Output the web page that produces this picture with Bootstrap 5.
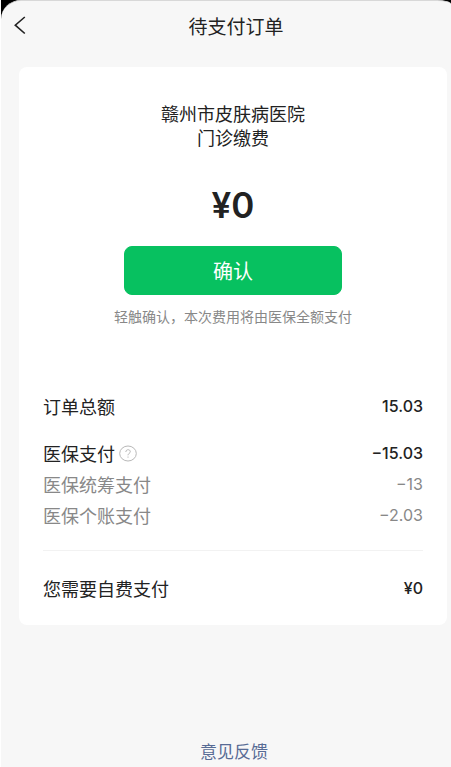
<!DOCTYPE html>
<html lang="zh-CN">
<head>
<meta charset="utf-8">
<meta name="viewport" content="width=device-width, initial-scale=1">
<title>待支付订单</title>
<link href="https://cdn.jsdelivr.net/npm/bootstrap@5.3.0/dist/css/bootstrap.min.css" rel="stylesheet">
<style>
  body { background: #f7f7f7; color: #222; font-family: "Noto Sans CJK SC", sans-serif; font-size: 18px; }
  .app { border-left: 1px solid #fff; }
  .topbar-back { background: #000; margin-left: -1px; padding-left: 1px; }
  .topbar { background: #f7f7f7; height: 50px; border-top: 1px solid #d8d8d8; border-radius: 20px 14px 0 0 / 19px 4px 0 0; padding: 0 8px 0 12px; }
  .topbar h1 { font-size: 19px; line-height: 24px; }
  .back-btn { width: 16px; height: 24px; color: #222; }
  .order-card { margin: 17px 4px 0 18px; padding: 34px 24px 21px; border-radius: 8px; background: #fff; }
  .merchant { line-height: 24px; }
  .amount { font: 600 35px/40px Inter, sans-serif; margin-top: 36px; }
  .confirm-btn { --bs-btn-bg: #07c160; --bs-btn-border-color: #07c160; --bs-btn-hover-bg: #06ad56; --bs-btn-hover-border-color: #06ad56; --bs-btn-active-bg: #06ad56;
    width: 218px; height: 49px; margin-top: 21px; border-radius: 8px; font-size: 20px; line-height: 24px; }
  .hint { font-size: 14px; line-height: 20px; margin-top: 11px; color: #888; }
  .fees { margin-top: 65px; line-height: 31px; }
  .fees dt { font-weight: 400; }
  .fees dd { font-family: Inter, sans-serif; font-size: 16px; font-weight: 500; }
  .fees .fee-sub { color: #888; }
  .fees .fee-sub dd { font-weight: 400; }
  .fee-group { margin-top: 16px; }
  .fee-self { margin-top: 19px; padding-top: 22px; border-top: 1px solid #f2f2f2; }
  .help-btn { width: 18px; height: 18px; color: #b8b8b8; margin-left: 4px; }
  .feedback { font-size: 17px; line-height: 24px; color: #576b95; padding-bottom: 4px; }
</style>
<script src="https://cdn.jsdelivr.net/npm/bootstrap@5.3.0/dist/js/bootstrap.bundle.min.js" defer></script>
</head>
<body>
<div class="app d-flex flex-column min-vh-100 overflow-hidden">
  <header class="topbar-back">
    <div class="topbar d-flex align-items-center">
      <button type="button" class="back-btn btn p-0 border-0 d-flex align-items-center" aria-label="返回">
        <svg width="14" height="20" viewBox="0 0 14 20" fill="none" stroke="currentColor" stroke-width="1.6" aria-hidden="true"><path d="M11.800 1 L2.300 9.200 L11.800 17.500"/></svg>
      </button>
      <h1 class="flex-grow-1 text-center fw-normal mb-0">待支付订单</h1>
    </div>
  </header>
  <main class="order-card">
    <section class="d-flex flex-column align-items-center text-center">
      <div class="merchant">赣州市皮肤病医院<br>门诊缴费</div>
      <div class="amount">¥0</div>
      <button type="button" class="confirm-btn btn btn-success p-0">确认</button>
      <p class="hint mb-0">轻触确认，本次费用将由医保全额支付</p>
    </section>
    <dl class="fees mb-0">
      <div class="d-flex justify-content-between"><dt>订单总额</dt><dd class="mb-0">15.03</dd></div>
      <div class="fee-group d-flex justify-content-between">
        <dt class="d-flex align-items-center">医保支付
          <button type="button" class="help-btn btn p-0 border-0 d-flex" aria-label="医保支付说明">
            <svg width="18" height="18" viewBox="0 0 18 18" fill="none" stroke="currentColor" aria-hidden="true"><ellipse cx="9" cy="8.500" rx="8.300" ry="7.500"/><path d="M6.800 7 C6.800 4 11.300 4 11.300 6.700 C11.300 8.300 9 8.400 9 10.300"/><path d="M9 11.500 V12.700"/></svg>
          </button>
        </dt>
        <dd class="mb-0">−15.03</dd>
      </div>
      <div class="fee-sub d-flex justify-content-between"><dt>医保统筹支付</dt><dd class="mb-0">−13</dd></div>
      <div class="fee-sub d-flex justify-content-between"><dt>医保个账支付</dt><dd class="mb-0">−2.03</dd></div>
      <div class="fee-self d-flex justify-content-between"><dt>您需要自费支付</dt><dd class="mb-0">¥0</dd></div>
    </dl>
  </main>
  <footer class="mt-auto text-center ps-3"><a href="#" class="feedback d-inline-block text-decoration-none">意见反馈</a></footer>
</div>
</body>
</html>
